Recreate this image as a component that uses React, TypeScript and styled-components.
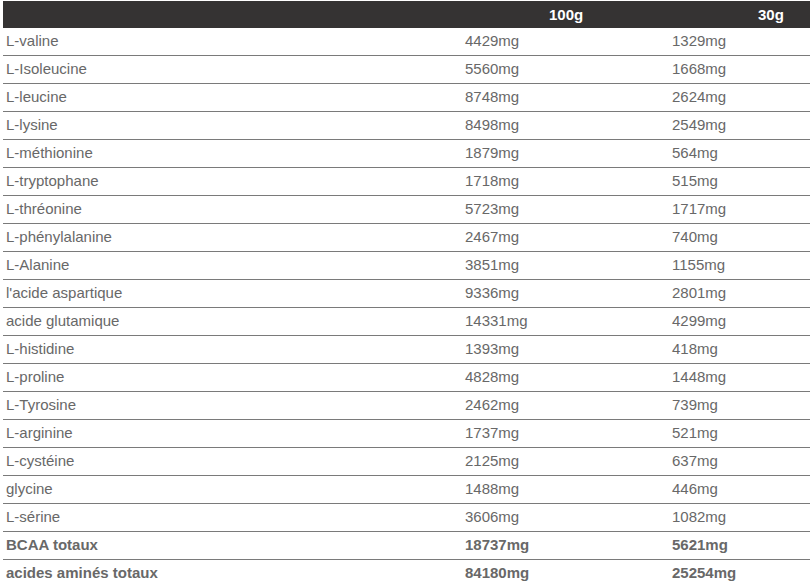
import React from "react";
import styled, { createGlobalStyle } from "styled-components";

const Global = createGlobalStyle`
  html, body { margin: 0; padding: 0; background: #ffffff; }
  body { font-family: "Liberation Sans", Arial, sans-serif; }
`;

const Page = styled.div`
  padding: 1px 0 0 3px;
  overflow: hidden;
  height: 584px;
  box-sizing: border-box;
`;

const Table = styled.div`
  display: grid;
  grid-template-columns: 459px 207px 1fr;
  width: 807px;
`;

const HeaderCell = styled.div<{ $indent: number }>`
  background: #353333;
  color: #ffffff;
  font-weight: bold;
  font-size: 15px;
  height: 27px;
  line-height: 17px;
  padding: 5px 0 0 ${(p) => p.$indent}px;
  box-sizing: border-box;
  white-space: nowrap;
`;

const Cell = styled.div<{ $bold?: boolean }>`
  color: #686868;
  font-size: 15px;
  font-weight: ${(p) => (p.$bold ? "bold" : "normal")};
  height: 28px;
  line-height: 17px;
  padding: 4px 0 0 3px;
  box-sizing: border-box;
  border-bottom: 1px solid #7a7a7a;
  white-space: nowrap;
`;

const rows: [string, string, string][] = [
  ["L-valine", "4429mg", "1329mg"],
  ["L-Isoleucine", "5560mg", "1668mg"],
  ["L-leucine", "8748mg", "2624mg"],
  ["L-lysine", "8498mg", "2549mg"],
  ["L-méthionine", "1879mg", "564mg"],
  ["L-tryptophane", "1718mg", "515mg"],
  ["L-thréonine", "5723mg", "1717mg"],
  ["L-phénylalanine", "2467mg", "740mg"],
  ["L-Alanine", "3851mg", "1155mg"],
  ["l'acide aspartique", "9336mg", "2801mg"],
  ["acide glutamique", "14331mg", "4299mg"],
  ["L-histidine", "1393mg", "418mg"],
  ["L-proline", "4828mg", "1448mg"],
  ["L-Tyrosine", "2462mg", "739mg"],
  ["L-arginine", "1737mg", "521mg"],
  ["L-cystéine", "2125mg", "637mg"],
  ["glycine", "1488mg", "446mg"],
  ["L-sérine", "3606mg", "1082mg"],
];

const totals: [string, string, string][] = [
  ["BCAA totaux", "18737mg", "5621mg"],
  ["acides aminés totaux", "84180mg", "25254mg"],
];

export default function App() {
  return (
    <>
      <Global />
      <Page>
        <Table>
          <HeaderCell $indent={0} />
          <HeaderCell $indent={87}>100g</HeaderCell>
          <HeaderCell $indent={89}>30g</HeaderCell>
          {rows.map((r) => (
            <React.Fragment key={r[0]}>
              <Cell>{r[0]}</Cell>
              <Cell>{r[1]}</Cell>
              <Cell>{r[2]}</Cell>
            </React.Fragment>
          ))}
          {totals.map((r) => (
            <React.Fragment key={r[0]}>
              <Cell $bold>{r[0]}</Cell>
              <Cell $bold>{r[1]}</Cell>
              <Cell $bold>{r[2]}</Cell>
            </React.Fragment>
          ))}
        </Table>
      </Page>
    </>
  );
}
